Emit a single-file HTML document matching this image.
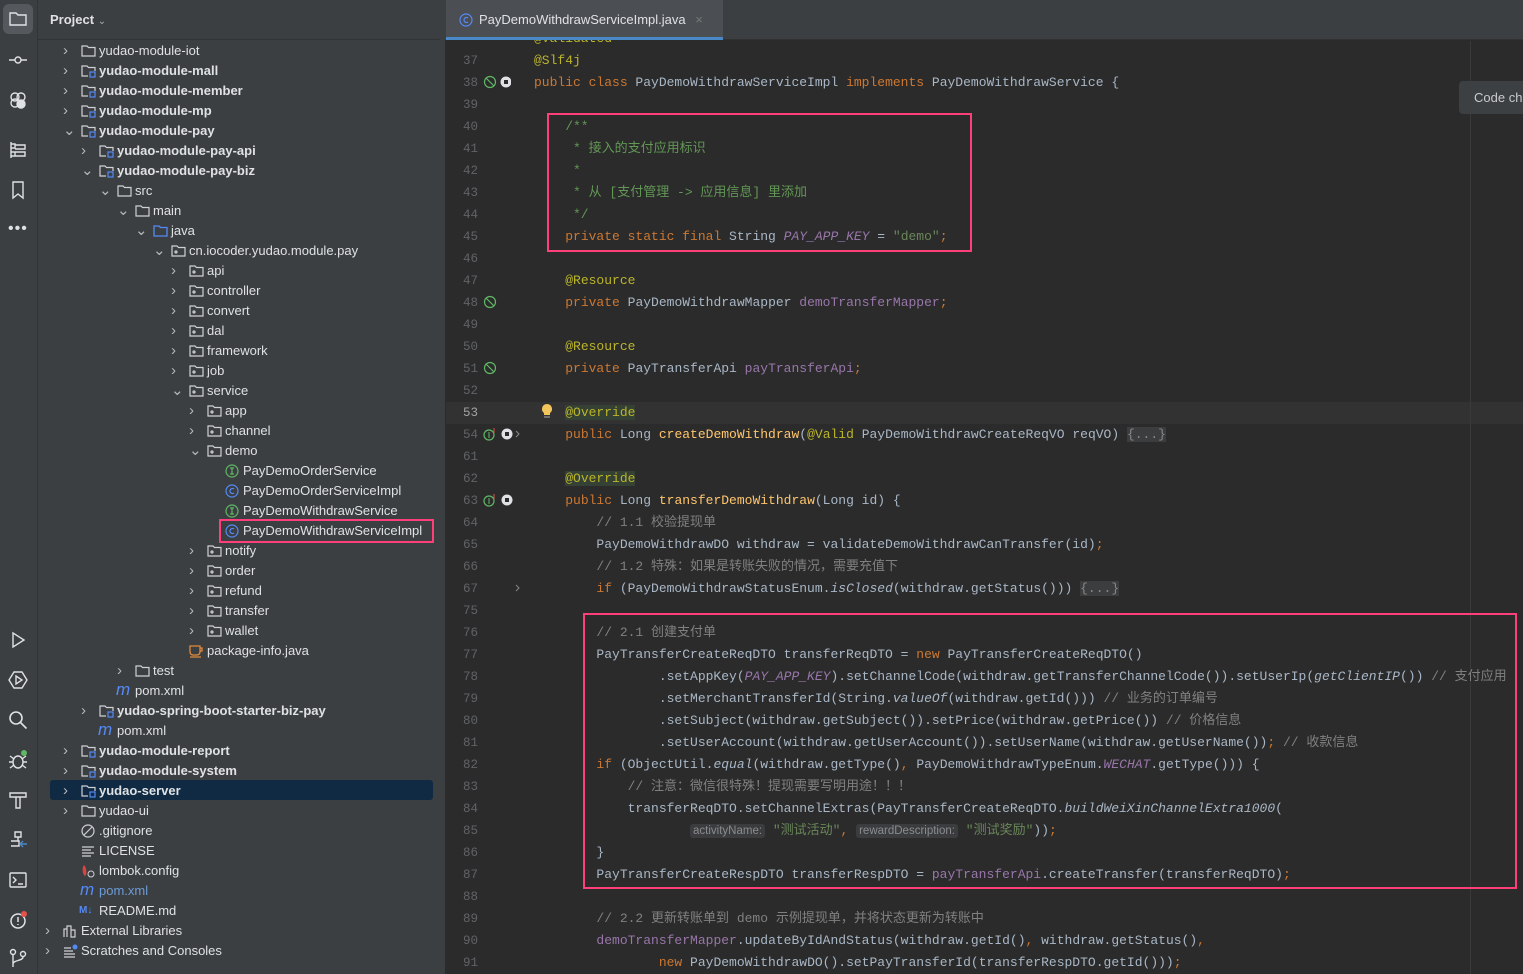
<!DOCTYPE html>
<html><head><meta charset="utf-8"><style>
*{margin:0;padding:0;box-sizing:border-box}
body{width:1523px;height:974px;overflow:hidden;background:#2b2b2b;font-family:"Liberation Sans","Noto Sans CJK SC",sans-serif;position:relative}
#strip{position:absolute;left:0;top:0;width:38px;height:974px;background:#3c3f41;border-right:1px solid #323437}
#proj{position:absolute;left:38px;top:0;width:408px;height:974px;background:#3c3f41;border-right:1px solid #2b2b2b}
#phead{position:absolute;left:0;top:0;width:408px;height:40px;border-bottom:1px solid #313335;color:#dfe1e5;font-weight:bold;font-size:13px;line-height:40px;padding-left:12px}
.r{position:absolute;height:20px;line-height:20px;font-size:13px;color:#dfe1e5;white-space:nowrap;transform:translateY(1px)}
.r b{font-weight:bold}
.ch{position:absolute;top:0;width:10px;height:20px;color:#b4b7bc;font-size:15px}
.ic{position:absolute;top:3px}
#tabs{position:absolute;left:446px;top:0;width:1077px;height:40px;background:#3c3f41;border-bottom:1px solid #323232}
#tab{position:absolute;left:0;top:0;width:277px;height:40px;background:#4b4e52;border-bottom:3px solid #4a88c7;color:#dfe1e5;font-size:13px;line-height:40px;padding-left:33px}
.ln{position:absolute;left:446px;width:32px;text-align:right;font-family:"Liberation Mono",monospace;font-size:12.5px;color:#606366;height:22px;line-height:22px;transform:translateY(1px)}
.cl{position:absolute;left:534px;height:22px;line-height:22px;font-family:"Liberation Mono","Noto Sans CJK SC",monospace;font-size:13px;color:#a9b7c6;white-space:pre;transform:translateY(1px)}
.k{color:#cc7832}.a{color:#bbb529}.c{color:#808080}.d{color:#629755}.s{color:#6a8759}.f{color:#9876aa}.fi{color:#9876aa;font-style:italic}.m{color:#ffc66d}.i{font-style:italic}
.fold{background:#3b3d3f;color:#888}
.hint{background:#3a3c3e;color:#8a8c8f;font-family:"Liberation Sans",sans-serif;font-size:11.5px;padding:1px 3px;border-radius:3px}
.box{position:absolute;border:2.5px solid #ff3f7a}
.sb{position:absolute;left:8px;width:20px;height:20px}
</style></head><body>
<div id="strip">
<div style="position:absolute;left:3px;top:4px;width:30px;height:30px;background:#55585c;border-radius:6px"></div>
<svg class="sb" style="top:9px" viewBox="0 0 20 20" fill="none" stroke="#dfe1e5" stroke-width="1.4"><path d="M2 4h6l2 2h8v10H2z"/></svg>
<svg class="sb" style="top:50px" viewBox="0 0 20 20" fill="none" stroke="#dfe1e5" stroke-width="1.4"><circle cx="10" cy="10" r="3"/><path d="M1 10h6M13 10h6"/></svg>
<svg class="sb" style="top:90px" viewBox="0 0 20 20" fill="none" stroke="#dfe1e5" stroke-width="1.4"><circle cx="7" cy="7" r="4"/><circle cx="13" cy="7" r="4"/><circle cx="7" cy="13" r="4"/><circle cx="13" cy="14" r="4" fill="#dfe1e5"/></svg>
<svg class="sb" style="top:140px" viewBox="0 0 20 20" fill="none" stroke="#dfe1e5" stroke-width="1.4"><path d="M3 2v16M3 4h4v4H3M7 5h10v4H7M3 12h4v4H3M7 12h10v4H7"/></svg>
<svg class="sb" style="top:180px" viewBox="0 0 20 20" fill="none" stroke="#dfe1e5" stroke-width="1.4"><path d="M5 2h10v16l-5-4-5 4z"/></svg>
<div style="position:absolute;left:8px;top:220px;color:#dfe1e5;font-size:16px;letter-spacing:1px">•••</div>
<svg class="sb" style="top:630px" viewBox="0 0 20 20" fill="none" stroke="#dfe1e5" stroke-width="1.4"><path d="M5 3l11 7-11 7z"/></svg>
<svg class="sb" style="top:670px" viewBox="0 0 20 20" fill="none" stroke="#dfe1e5" stroke-width="1.4"><path d="M6 2h8l5 8-5 8H6l-5-8z"/><path d="M8 6l6 4-6 4z"/></svg>
<svg class="sb" style="top:710px" viewBox="0 0 20 20" fill="none" stroke="#dfe1e5" stroke-width="1.6"><circle cx="8" cy="8" r="6"/><path d="M12.5 12.5l6 6"/></svg>
<svg class="sb" style="top:750px" viewBox="0 0 20 20" fill="none" stroke="#dfe1e5" stroke-width="1.4"><ellipse cx="10" cy="12" rx="5" ry="6"/><path d="M1 12h4M15 12h4M2 6l4 3M18 6l-4 3M2 18l4-3M18 18l-4-3"/><circle cx="16" cy="3" r="3" fill="#5fb865" stroke="none"/></svg>
<svg class="sb" style="top:790px" viewBox="0 0 20 20" fill="none" stroke="#dfe1e5" stroke-width="1.4"><path d="M2 3h16v4H2zM8 7v11h4V7"/></svg>
<svg class="sb" style="top:830px" viewBox="0 0 20 20" fill="none" stroke="#dfe1e5" stroke-width="1.4"><path d="M7 2h6v5H7zM10 7v4M3 11h8v5H3"/><path d="M12 14h7M15 11l-3 3 3 3" stroke="#4a88c7"/></svg>
<svg class="sb" style="top:870px" viewBox="0 0 20 20" fill="none" stroke="#dfe1e5" stroke-width="1.4"><rect x="2" y="3" width="16" height="14" rx="1"/><path d="M5 7l3 3-3 3M10 14h5"/></svg>
<svg class="sb" style="top:910px" viewBox="0 0 20 20" fill="none" stroke="#dfe1e5" stroke-width="1.5"><circle cx="10" cy="11" r="7"/><path d="M10 7v5M10 14v1"/><circle cx="16" cy="4" r="3" fill="#e5534b" stroke="none"/></svg>
<svg class="sb" style="top:948px" viewBox="0 0 20 20" fill="none" stroke="#dfe1e5" stroke-width="1.4"><circle cx="5" cy="4" r="2.5"/><circle cx="15" cy="6" r="2.5"/><path d="M5 7v12M15 9c0 4-10 3-10 7"/></svg>
</div>
<div id="proj"><div id="phead">Project <span style="font-weight:normal;font-size:10px;color:#aaa">⌄</span></div>
<div style="position:absolute;left:12px;top:780px;width:383px;height:20px;background:#0f2a42;border-radius:3px"></div>
<div style="position:absolute;left:402px;top:0;width:6px;height:40px;background:#3c3f41"></div>
</div>
<div id="tree" style="position:absolute;left:0;top:0">
<div class="r" style="top:40px;left:99px"><span class="ch" style="left:-36px">›</span><svg class="ic" style="left:-18px" width="15" height="14" viewBox="0 0 15 14" fill="none" stroke="#ced0d6" stroke-width="1.2"><path d="M1 2h5l1.5 1.5H14V12H1z"/></svg>yudao-module-iot</div>
<div class="r" style="top:60px;left:99px"><span class="ch" style="left:-36px">›</span><svg class="ic" style="left:-18px" width="15" height="14" viewBox="0 0 15 14" fill="none" stroke="#ced0d6" stroke-width="1.2"><path d="M7 12H1V2h5l1.5 1.5H14V7"/><rect x="9" y="8" width="5" height="5" stroke="#548af7"/></svg><b>yudao-module-mall</b></div>
<div class="r" style="top:80px;left:99px"><span class="ch" style="left:-36px">›</span><svg class="ic" style="left:-18px" width="15" height="14" viewBox="0 0 15 14" fill="none" stroke="#ced0d6" stroke-width="1.2"><path d="M7 12H1V2h5l1.5 1.5H14V7"/><rect x="9" y="8" width="5" height="5" stroke="#548af7"/></svg><b>yudao-module-member</b></div>
<div class="r" style="top:100px;left:99px"><span class="ch" style="left:-36px">›</span><svg class="ic" style="left:-18px" width="15" height="14" viewBox="0 0 15 14" fill="none" stroke="#ced0d6" stroke-width="1.2"><path d="M7 12H1V2h5l1.5 1.5H14V7"/><rect x="9" y="8" width="5" height="5" stroke="#548af7"/></svg><b>yudao-module-mp</b></div>
<div class="r" style="top:120px;left:99px"><span class="ch" style="left:-36px">⌄</span><svg class="ic" style="left:-18px" width="15" height="14" viewBox="0 0 15 14" fill="none" stroke="#ced0d6" stroke-width="1.2"><path d="M7 12H1V2h5l1.5 1.5H14V7"/><rect x="9" y="8" width="5" height="5" stroke="#548af7"/></svg><b>yudao-module-pay</b></div>
<div class="r" style="top:140px;left:117px"><span class="ch" style="left:-36px">›</span><svg class="ic" style="left:-18px" width="15" height="14" viewBox="0 0 15 14" fill="none" stroke="#ced0d6" stroke-width="1.2"><path d="M7 12H1V2h5l1.5 1.5H14V7"/><rect x="9" y="8" width="5" height="5" stroke="#548af7"/></svg><b>yudao-module-pay-api</b></div>
<div class="r" style="top:160px;left:117px"><span class="ch" style="left:-36px">⌄</span><svg class="ic" style="left:-18px" width="15" height="14" viewBox="0 0 15 14" fill="none" stroke="#ced0d6" stroke-width="1.2"><path d="M7 12H1V2h5l1.5 1.5H14V7"/><rect x="9" y="8" width="5" height="5" stroke="#548af7"/></svg><b>yudao-module-pay-biz</b></div>
<div class="r" style="top:180px;left:135px"><span class="ch" style="left:-36px">⌄</span><svg class="ic" style="left:-18px" width="15" height="14" viewBox="0 0 15 14" fill="none" stroke="#ced0d6" stroke-width="1.2"><path d="M1 2h5l1.5 1.5H14V12H1z"/></svg>src</div>
<div class="r" style="top:200px;left:153px"><span class="ch" style="left:-36px">⌄</span><svg class="ic" style="left:-18px" width="15" height="14" viewBox="0 0 15 14" fill="none" stroke="#ced0d6" stroke-width="1.2"><path d="M1 2h5l1.5 1.5H14V12H1z"/></svg>main</div>
<div class="r" style="top:220px;left:171px"><span class="ch" style="left:-36px">⌄</span><svg class="ic" style="left:-18px" width="15" height="14" viewBox="0 0 15 14" fill="none" stroke="#548af7" stroke-width="1.3"><path d="M1 2h5l1.5 1.5H14V12H1z"/></svg>java</div>
<div class="r" style="top:240px;left:189px"><span class="ch" style="left:-36px">⌄</span><svg class="ic" style="left:-18px" width="15" height="14" viewBox="0 0 15 14" fill="none" stroke="#ced0d6" stroke-width="1.2"><path d="M1 2h5l1.5 1.5H14V12H1z"/><circle cx="5" cy="8" r="1"/></svg>cn.iocoder.yudao.module.pay</div>
<div class="r" style="top:260px;left:207px"><span class="ch" style="left:-36px">›</span><svg class="ic" style="left:-18px" width="15" height="14" viewBox="0 0 15 14" fill="none" stroke="#ced0d6" stroke-width="1.2"><path d="M1 2h5l1.5 1.5H14V12H1z"/><circle cx="5" cy="8" r="1"/></svg>api</div>
<div class="r" style="top:280px;left:207px"><span class="ch" style="left:-36px">›</span><svg class="ic" style="left:-18px" width="15" height="14" viewBox="0 0 15 14" fill="none" stroke="#ced0d6" stroke-width="1.2"><path d="M1 2h5l1.5 1.5H14V12H1z"/><circle cx="5" cy="8" r="1"/></svg>controller</div>
<div class="r" style="top:300px;left:207px"><span class="ch" style="left:-36px">›</span><svg class="ic" style="left:-18px" width="15" height="14" viewBox="0 0 15 14" fill="none" stroke="#ced0d6" stroke-width="1.2"><path d="M1 2h5l1.5 1.5H14V12H1z"/><circle cx="5" cy="8" r="1"/></svg>convert</div>
<div class="r" style="top:320px;left:207px"><span class="ch" style="left:-36px">›</span><svg class="ic" style="left:-18px" width="15" height="14" viewBox="0 0 15 14" fill="none" stroke="#ced0d6" stroke-width="1.2"><path d="M1 2h5l1.5 1.5H14V12H1z"/><circle cx="5" cy="8" r="1"/></svg>dal</div>
<div class="r" style="top:340px;left:207px"><span class="ch" style="left:-36px">›</span><svg class="ic" style="left:-18px" width="15" height="14" viewBox="0 0 15 14" fill="none" stroke="#ced0d6" stroke-width="1.2"><path d="M1 2h5l1.5 1.5H14V12H1z"/><circle cx="5" cy="8" r="1"/></svg>framework</div>
<div class="r" style="top:360px;left:207px"><span class="ch" style="left:-36px">›</span><svg class="ic" style="left:-18px" width="15" height="14" viewBox="0 0 15 14" fill="none" stroke="#ced0d6" stroke-width="1.2"><path d="M1 2h5l1.5 1.5H14V12H1z"/><circle cx="5" cy="8" r="1"/></svg>job</div>
<div class="r" style="top:380px;left:207px"><span class="ch" style="left:-36px">⌄</span><svg class="ic" style="left:-18px" width="15" height="14" viewBox="0 0 15 14" fill="none" stroke="#ced0d6" stroke-width="1.2"><path d="M1 2h5l1.5 1.5H14V12H1z"/><circle cx="5" cy="8" r="1"/></svg>service</div>
<div class="r" style="top:400px;left:225px"><span class="ch" style="left:-36px">›</span><svg class="ic" style="left:-18px" width="15" height="14" viewBox="0 0 15 14" fill="none" stroke="#ced0d6" stroke-width="1.2"><path d="M1 2h5l1.5 1.5H14V12H1z"/><circle cx="5" cy="8" r="1"/></svg>app</div>
<div class="r" style="top:420px;left:225px"><span class="ch" style="left:-36px">›</span><svg class="ic" style="left:-18px" width="15" height="14" viewBox="0 0 15 14" fill="none" stroke="#ced0d6" stroke-width="1.2"><path d="M1 2h5l1.5 1.5H14V12H1z"/><circle cx="5" cy="8" r="1"/></svg>channel</div>
<div class="r" style="top:440px;left:225px"><span class="ch" style="left:-36px">⌄</span><svg class="ic" style="left:-18px" width="15" height="14" viewBox="0 0 15 14" fill="none" stroke="#ced0d6" stroke-width="1.2"><path d="M1 2h5l1.5 1.5H14V12H1z"/><circle cx="5" cy="8" r="1"/></svg>demo</div>
<div class="r" style="top:460px;left:243px"><svg class="ic" style="left:-18px" width="14" height="14" viewBox="0 0 14 14" fill="none" stroke="#5fb865" stroke-width="1.2"><circle cx="7" cy="7" r="6"/><path d="M5 4h4M7 4v6M5 10h4"/></svg>PayDemoOrderService</div>
<div class="r" style="top:480px;left:243px"><svg class="ic" style="left:-18px" width="14" height="14" viewBox="0 0 14 14" fill="none" stroke="#548af7" stroke-width="1.2"><circle cx="7" cy="7" r="6"/><path d="M9 5a2.5 2.5 0 1 0 0 4"/></svg>PayDemoOrderServiceImpl</div>
<div class="r" style="top:500px;left:243px"><svg class="ic" style="left:-18px" width="14" height="14" viewBox="0 0 14 14" fill="none" stroke="#5fb865" stroke-width="1.2"><circle cx="7" cy="7" r="6"/><path d="M5 4h4M7 4v6M5 10h4"/></svg>PayDemoWithdrawService</div>
<div class="r" style="top:520px;left:243px"><svg class="ic" style="left:-18px" width="14" height="14" viewBox="0 0 14 14" fill="none" stroke="#548af7" stroke-width="1.2"><circle cx="7" cy="7" r="6"/><path d="M9 5a2.5 2.5 0 1 0 0 4"/></svg>PayDemoWithdrawServiceImpl</div>
<div class="r" style="top:540px;left:225px"><span class="ch" style="left:-36px">›</span><svg class="ic" style="left:-18px" width="15" height="14" viewBox="0 0 15 14" fill="none" stroke="#ced0d6" stroke-width="1.2"><path d="M1 2h5l1.5 1.5H14V12H1z"/><circle cx="5" cy="8" r="1"/></svg>notify</div>
<div class="r" style="top:560px;left:225px"><span class="ch" style="left:-36px">›</span><svg class="ic" style="left:-18px" width="15" height="14" viewBox="0 0 15 14" fill="none" stroke="#ced0d6" stroke-width="1.2"><path d="M1 2h5l1.5 1.5H14V12H1z"/><circle cx="5" cy="8" r="1"/></svg>order</div>
<div class="r" style="top:580px;left:225px"><span class="ch" style="left:-36px">›</span><svg class="ic" style="left:-18px" width="15" height="14" viewBox="0 0 15 14" fill="none" stroke="#ced0d6" stroke-width="1.2"><path d="M1 2h5l1.5 1.5H14V12H1z"/><circle cx="5" cy="8" r="1"/></svg>refund</div>
<div class="r" style="top:600px;left:225px"><span class="ch" style="left:-36px">›</span><svg class="ic" style="left:-18px" width="15" height="14" viewBox="0 0 15 14" fill="none" stroke="#ced0d6" stroke-width="1.2"><path d="M1 2h5l1.5 1.5H14V12H1z"/><circle cx="5" cy="8" r="1"/></svg>transfer</div>
<div class="r" style="top:620px;left:225px"><span class="ch" style="left:-36px">›</span><svg class="ic" style="left:-18px" width="15" height="14" viewBox="0 0 15 14" fill="none" stroke="#ced0d6" stroke-width="1.2"><path d="M1 2h5l1.5 1.5H14V12H1z"/><circle cx="5" cy="8" r="1"/></svg>wallet</div>
<div class="r" style="top:640px;left:207px"><svg class="ic" style="left:-18px" width="15" height="14" viewBox="0 0 15 14" fill="none" stroke="#e08a3c" stroke-width="1.3"><path d="M1 2h10v6a3 3 0 0 1-3 3H4a3 3 0 0 1-3-3zM11 4h2v3h-2M1 13h11"/></svg>package-info.java</div>
<div class="r" style="top:660px;left:153px"><span class="ch" style="left:-36px">›</span><svg class="ic" style="left:-18px" width="15" height="14" viewBox="0 0 15 14" fill="none" stroke="#ced0d6" stroke-width="1.2"><path d="M1 2h5l1.5 1.5H14V12H1z"/></svg>test</div>
<div class="r" style="top:680px;left:135px"><span style="position:absolute;left:-19px;color:#548af7;font-style:italic;font-size:17px;line-height:18px">m</span>pom.xml</div>
<div class="r" style="top:700px;left:117px"><span class="ch" style="left:-36px">›</span><svg class="ic" style="left:-18px" width="15" height="14" viewBox="0 0 15 14" fill="none" stroke="#ced0d6" stroke-width="1.2"><path d="M7 12H1V2h5l1.5 1.5H14V7"/><rect x="9" y="8" width="5" height="5" stroke="#548af7"/></svg><b>yudao-spring-boot-starter-biz-pay</b></div>
<div class="r" style="top:720px;left:117px"><span style="position:absolute;left:-19px;color:#548af7;font-style:italic;font-size:17px;line-height:18px">m</span>pom.xml</div>
<div class="r" style="top:740px;left:99px"><span class="ch" style="left:-36px">›</span><svg class="ic" style="left:-18px" width="15" height="14" viewBox="0 0 15 14" fill="none" stroke="#ced0d6" stroke-width="1.2"><path d="M7 12H1V2h5l1.5 1.5H14V7"/><rect x="9" y="8" width="5" height="5" stroke="#548af7"/></svg><b>yudao-module-report</b></div>
<div class="r" style="top:760px;left:99px"><span class="ch" style="left:-36px">›</span><svg class="ic" style="left:-18px" width="15" height="14" viewBox="0 0 15 14" fill="none" stroke="#ced0d6" stroke-width="1.2"><path d="M7 12H1V2h5l1.5 1.5H14V7"/><rect x="9" y="8" width="5" height="5" stroke="#548af7"/></svg><b>yudao-module-system</b></div>
<div class="r" style="top:780px;left:99px"><span class="ch" style="left:-36px">›</span><svg class="ic" style="left:-18px" width="15" height="14" viewBox="0 0 15 14" fill="none" stroke="#ced0d6" stroke-width="1.2"><path d="M7 12H1V2h5l1.5 1.5H14V7"/><rect x="9" y="8" width="5" height="5" stroke="#548af7"/></svg><b>yudao-server</b></div>
<div class="r" style="top:800px;left:99px"><span class="ch" style="left:-36px">›</span><svg class="ic" style="left:-18px" width="15" height="14" viewBox="0 0 15 14" fill="none" stroke="#ced0d6" stroke-width="1.2"><path d="M1 2h5l1.5 1.5H14V12H1z"/></svg>yudao-ui</div>
<div class="r" style="top:820px;left:99px"><svg class="ic" style="left:-18px" width="14" height="14" viewBox="0 0 14 14" fill="none" stroke="#ced0d6" stroke-width="1.2"><circle cx="7" cy="7" r="6"/><path d="M3 11l8-8"/></svg>.gitignore</div>
<div class="r" style="top:840px;left:99px"><svg class="ic" style="left:-18px" width="14" height="14" viewBox="0 0 14 14" fill="none" stroke="#ced0d6" stroke-width="1.2"><path d="M1 3h12M1 6h9M1 9h12M1 12h9"/></svg>LICENSE</div>
<div class="r" style="top:860px;left:99px"><svg class="ic" style="left:-18px" width="14" height="14" viewBox="0 0 14 14"><path d="M3 1c-2 2-2 9 1 11 2-1 2-8-1-11z" fill="#d8453c"/><circle cx="10" cy="10" r="3" fill="none" stroke="#ced0d6"/></svg>lombok.config</div>
<div class="r" style="top:880px;left:99px;color:#6c9bd8"><span style="position:absolute;left:-19px;color:#548af7;font-style:italic;font-size:17px;line-height:18px">m</span>pom.xml</div>
<div class="r" style="top:900px;left:99px"><span style="position:absolute;left:-20px;color:#548af7;font-weight:bold;font-size:10px">M↓</span>README.md</div>
<div class="r" style="top:920px;left:81px"><span class="ch" style="left:-36px">›</span><svg class="ic" style="left:-18px" width="14" height="14" viewBox="0 0 14 14" fill="none" stroke="#ced0d6" stroke-width="1.2"><path d="M1 13V5h3v8M4 13V2h4v11M8 13V6h4v7z"/></svg>External Libraries</div>
<div class="r" style="top:940px;left:81px"><span class="ch" style="left:-36px">›</span><svg class="ic" style="left:-18px" width="15" height="14" viewBox="0 0 15 14" fill="none" stroke="#ced0d6" stroke-width="1.2"><path d="M1 4h7M1 7h9M1 10h11M1 13h11"/><circle cx="12" cy="3" r="2.5" fill="#548af7" stroke="none"/></svg>Scratches and Consoles</div>
</div>
<div class="box" style="left:219px;top:519px;width:215px;height:24px"></div>

<div id="tabs"><div id="tab"><svg style="position:absolute;left:13px;top:13px" width="14" height="14" viewBox="0 0 14 14" fill="none" stroke="#548af7" stroke-width="1.2"><circle cx="7" cy="7" r="6"/><path d="M9 5a2.5 2.5 0 1 0 0 4"/></svg>PayDemoWithdrawServiceImpl.java <span style="color:#777;margin-left:6px">×</span></div></div>
<div style="position:absolute;left:446px;top:41px;width:1077px;height:933px;background:#2b2b2b"></div>
<div style="position:absolute;left:446px;top:402px;width:1077px;height:22px;background:#323232"></div>
<div style="position:absolute;left:1470px;top:41px;width:1px;height:933px;background:#3a3a3a"></div>
<div style="position:absolute;left:1459px;top:81px;width:70px;height:33px;background:#3d4043;border-radius:4px;color:#c8cacd;font-size:13px;line-height:33px;padding-left:15px;white-space:nowrap">Code ch</div>
<div class="cl" style="top:27px;clip-path:inset(12px 0 0 0)"><span class="a">@Validated</span></div>

<div class="ln" style="top:49px">37</div><div class="cl" style="top:49px"><span class="a">@Slf4j</span></div>
<div class="ln" style="top:71px">38</div><div class="cl" style="top:71px"><span class="k">public class </span>PayDemoWithdrawServiceImpl <span class="k">implements </span>PayDemoWithdrawService {</div>
<div class="ln" style="top:93px">39</div>
<div class="ln" style="top:115px">40</div><div class="cl d" style="top:115px">    /**</div>
<div class="ln" style="top:137px">41</div><div class="cl d" style="top:137px">     * 接入的支付应用标识</div>
<div class="ln" style="top:159px">42</div><div class="cl d" style="top:159px">     *</div>
<div class="ln" style="top:181px">43</div><div class="cl d" style="top:181px">     * 从 [支付管理 -&gt; 应用信息] 里添加</div>
<div class="ln" style="top:203px">44</div><div class="cl d" style="top:203px">     */</div>
<div class="ln" style="top:225px">45</div><div class="cl" style="top:225px">    <span class="k">private static final </span>String <span class="fi">PAY_APP_KEY</span> = <span class="s">"demo"</span><span class="k">;</span></div>
<div class="ln" style="top:247px">46</div>
<div class="ln" style="top:269px">47</div><div class="cl" style="top:269px">    <span class="a">@Resource</span></div>
<div class="ln" style="top:291px">48</div><div class="cl" style="top:291px">    <span class="k">private </span>PayDemoWithdrawMapper <span class="f">demoTransferMapper</span><span class="k">;</span></div>
<div class="ln" style="top:313px">49</div>
<div class="ln" style="top:335px">50</div><div class="cl" style="top:335px">    <span class="a">@Resource</span></div>
<div class="ln" style="top:357px">51</div><div class="cl" style="top:357px">    <span class="k">private </span>PayTransferApi <span class="f">payTransferApi</span><span class="k">;</span></div>
<div class="ln" style="top:379px">52</div>
<div class="ln" style="top:401px;color:#a4a3a3">53</div><div class="cl" style="top:401px">    <span class="a" style="background:#344134">@Override</span></div>
<div class="ln" style="top:423px">54</div><div class="cl" style="top:423px">    <span class="k">public </span>Long <span class="m">createDemoWithdraw</span>(<span class="a">@Valid </span>PayDemoWithdrawCreateReqVO reqVO) <span class="fold">{...}</span></div>
<div class="ln" style="top:445px">61</div>
<div class="ln" style="top:467px">62</div><div class="cl" style="top:467px">    <span class="a" style="background:#344134">@Override</span></div>
<div class="ln" style="top:489px">63</div><div class="cl" style="top:489px">    <span class="k">public </span>Long <span class="m">transferDemoWithdraw</span>(Long id) {</div>
<div class="ln" style="top:511px">64</div><div class="cl c" style="top:511px">        // 1.1 校验提现单</div>
<div class="ln" style="top:533px">65</div><div class="cl" style="top:533px">        PayDemoWithdrawDO withdraw = validateDemoWithdrawCanTransfer(id)<span class="k">;</span></div>
<div class="ln" style="top:555px">66</div><div class="cl c" style="top:555px">        // 1.2 特殊：如果是转账失败的情况，需要充值下</div>
<div class="ln" style="top:577px">67</div><div class="cl" style="top:577px">        <span class="k">if </span>(PayDemoWithdrawStatusEnum.<span class="i">isClosed</span>(withdraw.getStatus())) <span class="fold">{...}</span></div>
<div class="ln" style="top:599px">75</div>
<div class="ln" style="top:621px">76</div><div class="cl c" style="top:621px">        // 2.1 创建支付单</div>
<div class="ln" style="top:643px">77</div><div class="cl" style="top:643px">        PayTransferCreateReqDTO transferReqDTO = <span class="k">new </span>PayTransferCreateReqDTO()</div>
<div class="ln" style="top:665px">78</div><div class="cl" style="top:665px">                .setAppKey(<span class="fi">PAY_APP_KEY</span>).setChannelCode(withdraw.getTransferChannelCode()).setUserIp(<span class="i">getClientIP</span>()) <span class="c">// 支付应用</span></div>
<div class="ln" style="top:687px">79</div><div class="cl" style="top:687px">                .setMerchantTransferId(String.<span class="i">valueOf</span>(withdraw.getId())) <span class="c">// 业务的订单编号</span></div>
<div class="ln" style="top:709px">80</div><div class="cl" style="top:709px">                .setSubject(withdraw.getSubject()).setPrice(withdraw.getPrice()) <span class="c">// 价格信息</span></div>
<div class="ln" style="top:731px">81</div><div class="cl" style="top:731px">                .setUserAccount(withdraw.getUserAccount()).setUserName(withdraw.getUserName())<span class="k">;</span> <span class="c">// 收款信息</span></div>
<div class="ln" style="top:753px">82</div><div class="cl" style="top:753px">        <span class="k">if </span>(ObjectUtil.<span class="i">equal</span>(withdraw.getType()<span class="k">, </span>PayDemoWithdrawTypeEnum.<span class="fi">WECHAT</span>.getType())) {</div>
<div class="ln" style="top:775px">83</div><div class="cl c" style="top:775px">            // 注意：微信很特殊！提现需要写明用途！！！</div>
<div class="ln" style="top:797px">84</div><div class="cl" style="top:797px">            transferReqDTO.setChannelExtras(PayTransferCreateReqDTO.<span class="i">buildWeiXinChannelExtra1000</span>(</div>
<div class="ln" style="top:819px">85</div><div class="cl" style="top:819px">                    <span class="hint">activityName:</span> <span class="s">"测试活动"</span><span class="k">, </span><span class="hint">rewardDescription:</span> <span class="s">"测试奖励"</span>))<span class="k">;</span></div>
<div class="ln" style="top:841px">86</div><div class="cl" style="top:841px">        }</div>
<div class="ln" style="top:863px">87</div><div class="cl" style="top:863px">        PayTransferCreateRespDTO transferRespDTO = <span class="f">payTransferApi</span>.createTransfer(transferReqDTO)<span class="k">;</span></div>
<div class="ln" style="top:885px">88</div>
<div class="ln" style="top:907px">89</div><div class="cl c" style="top:907px">        // 2.2 更新转账单到 demo 示例提现单，并将状态更新为转账中</div>
<div class="ln" style="top:929px">90</div><div class="cl" style="top:929px">        <span class="f">demoTransferMapper</span>.updateByIdAndStatus(withdraw.getId()<span class="k">, </span>withdraw.getStatus()<span class="k">,</span></div>
<div class="ln" style="top:951px">91</div><div class="cl" style="top:951px">                <span class="k">new </span>PayDemoWithdrawDO().setPayTransferId(transferRespDTO.getId()))<span class="k">;</span></div>

<svg style="position:absolute;left:483px;top:75px" width="28" height="14" viewBox="0 0 28 14" fill="none"><circle cx="7" cy="7" r="5.5" stroke="#5fb865" stroke-width="1.2"/><path d="M3 3l8 8" stroke="#5fb865" stroke-width="1.2"/><circle cx="23" cy="7" r="5.5" fill="#dfe1e5"/><rect x="21" y="5" width="4" height="4" fill="#2b2b2b"/></svg>
<svg style="position:absolute;left:483px;top:295px" width="14" height="14" viewBox="0 0 14 14" fill="none" stroke="#5fb865" stroke-width="1.2"><circle cx="7" cy="7" r="5.5"/><path d="M3 3l8 8"/></svg>
<svg style="position:absolute;left:483px;top:361px" width="14" height="14" viewBox="0 0 14 14" fill="none" stroke="#5fb865" stroke-width="1.2"><circle cx="7" cy="7" r="5.5"/><path d="M3 3l8 8"/></svg>
<svg style="position:absolute;left:541px;top:403px" width="12" height="16" viewBox="0 0 12 16"><path d="M6 1a5 5 0 0 0-3 9v2h6v-2a5 5 0 0 0-3-9z" fill="#f2c55c"/><path d="M3 14h6" stroke="#aaa"/></svg>
<svg style="position:absolute;left:483px;top:427px" width="40" height="14" viewBox="0 0 40 14" fill="none"><circle cx="6" cy="8" r="5" stroke="#5fb865" stroke-width="1.2"/><path d="M6 5v6" stroke="#5fb865"/><path d="M11 1v5" stroke="#e5534b"/><circle cx="24" cy="7" r="5.5" fill="#dfe1e5"/><rect x="22" y="5" width="4" height="4" fill="#2b2b2b"/><path d="M33 4l3 3-3 3" stroke="#888"/></svg>
<svg style="position:absolute;left:483px;top:493px" width="30" height="14" viewBox="0 0 30 14" fill="none"><circle cx="6" cy="8" r="5" stroke="#5fb865" stroke-width="1.2"/><path d="M6 5v6" stroke="#5fb865"/><path d="M11 1v5" stroke="#e5534b"/><circle cx="24" cy="7" r="5.5" fill="#dfe1e5"/><rect x="22" y="5" width="4" height="4" fill="#2b2b2b"/></svg>
<svg style="position:absolute;left:514px;top:581px" width="8" height="14" viewBox="0 0 8 14" fill="none" stroke="#888"><path d="M2 4l3 3-3 3"/></svg>

<div class="box" style="left:547px;top:113px;width:425px;height:139px"></div>
<div class="box" style="left:583px;top:613px;width:934px;height:276px"></div>
</body></html>
